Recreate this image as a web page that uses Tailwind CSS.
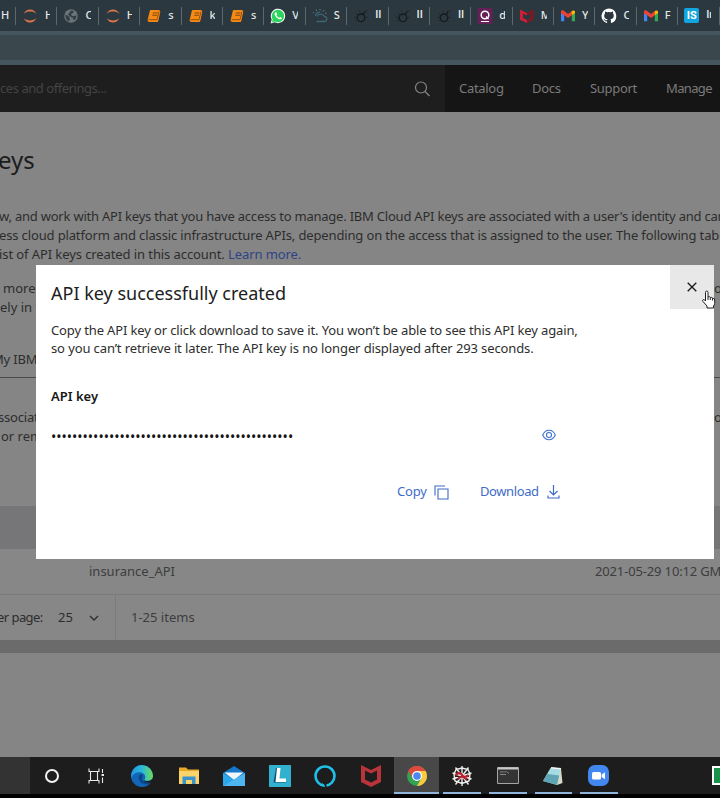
<!DOCTYPE html>
<html lang="en">
<head>
<meta charset="utf-8">
<title>API keys</title>
<script src="https://cdn.jsdelivr.net/npm/@tailwindcss/browser@4"></script>
</head>
<body class="w-[720px] h-[798px] overflow-hidden bg-black font-['Noto_Sans','Open_Sans',sans-serif]">
<svg class="hidden">
  <symbol id="jup" viewBox="0 0 16 16"><path d="M1.500 6C3 2.800 5.500 1.500 8 1.500S13 2.800 14.500 6C12.500 4.200 10.500 3.600 8 3.600S3.500 4.200 1.500 6ZM1.500 10C3 13.200 5.500 14.500 8 14.500S13 13.200 14.500 10C12.500 11.800 10.500 12.400 8 12.400S3.500 11.800 1.500 10Z" fill="#e0754a"/></symbol>
  <symbol id="globe" viewBox="0 0 16 16"><circle cx="8" cy="8" r="6.800" fill="#6a7479"/><path d="M2.500 6.500L6 8.500L7 11L6 13.500C3.500 12.500 2 9.500 2.500 6.500ZM8 2.500L11 3L10 5L8 6L9 8H12L13.500 7L13 10.500L10.500 12.500L10 10L7 8.500L5 6.500Z" fill="#323f46"/></symbol>
  <symbol id="book" viewBox="0 0 16 16"><path d="M4.800 2H12.500C14 2.200 14.500 3 14.200 4.200L12.300 13C12 13.800 11.500 14 10.800 14H3C1.800 13.800 1.300 12.800 1.700 11.600L3.700 3.200C3.900 2.400 4.200 2.100 4.800 2Z" fill="#f68a14"/><path d="M6.800 5H11.500M6.300 7.200H11" stroke="#7c4a1c" stroke-width="1.100"/><path d="M2.500 11.700H11L13 3.500" fill="none" stroke="#8f4c10" stroke-width=".9"/></symbol>
  <symbol id="wa" viewBox="0 0 16 16"><path d="M.6 15.400L1.700 11.500A7.200 7.200 0 1 1 4.600 14.300Z" fill="#fff"/><path d="M1.800 14.200L2.700 11.400A6.200 6.200 0 1 1 4.800 13.400Z" fill="#2bd45c"/><path d="M5.300 4.200C4 5.300 4.500 7.300 6.300 9.300S10.500 12 11.600 10.700C12 10 11.800 9.700 10.200 8.900L9.200 9.800C8 9.300 7 8.300 6.500 7.300L7.200 6.300L6.400 4.400Z" fill="#fff"/></symbol>
  <symbol id="cloud" viewBox="0 0 16 16"><path d="M4.500 13.500H12A2.600 2.600 0 0 0 12.300 8.300A4 4 0 0 0 5 8.500M3.500 8A3.500 3.500 0 0 1 8 4.500" fill="none" stroke="#3f6675" stroke-width="1.300"/><path d="M2 5L.8 4M4.500 3L4 1.500M8 2.500V1M11 3.500L12 2M13 5.500L14.500 5" stroke="#50808f" stroke-width="1"/></symbol>
  <symbol id="sun" viewBox="0 0 16 16"><circle cx="8" cy="9.800" r="3.800" fill="none" stroke="#151b1f" stroke-width="1.400"/><path d="M8.500 6.500Q13 5 11.500 3" fill="none" stroke="#151b1f" stroke-width="1.300"/><path d="M2.300 13L3.500 12.200M1.500 9.500H2.800M3 5.500L4.200 6.500M6.500 2.500L7 3.800M13 3.500L14.200 2.500M13 9.500H14.200" fill="none" stroke="#182024" stroke-width="1"/></symbol>
  <symbol id="qq" viewBox="0 0 16 16"><rect x=".5" width="15" height="16" rx="1.500" fill="#642057"/><circle cx="8" cy="7" r="3.800" fill="none" stroke="#fff" stroke-width="1.500"/><path d="M9 8.500L11.500 11M4 13.500H12" stroke="#fff" stroke-width="1.200"/></symbol>
  <symbol id="shield" viewBox="0 0 16 16"><path d="M1 1.500L8 5V7.500L4 5.500V10L8 12V15L1 11.800Z" fill="#cf1f35"/><path d="M8 5L14.500 1.500V11.800L8 15V12L11.500 10V5.500L8 7.500Z" fill="#7e1924"/></symbol>
  <symbol id="gmail" viewBox="0 0 16 16"><path d="M1 4V13.300H4.200V7Z" fill="#4285f4"/><path d="M15 4V13.300H11.800V7Z" fill="#34a853"/><path d="M1 5.500V3.800C1 2.300 2.800 2 3.800 2.800L8 6L12.200 2.800L11.800 7.200L8 10L4.200 7.200Z" fill="#ea4335"/><path d="M11.800 7.200V3.100C13 2 15 2.300 15 4V5Z" fill="#fbbc04"/></symbol>
  <symbol id="gh" viewBox="0 0 16 16"><path fill="#fff" d="M8 .5a7.500 7.500 0 0 0-2.400 14.600c.4.100.5-.2.500-.4v-1.400c-2.100.5-2.500-1-2.500-1-.4-.9-.9-1.100-.9-1.100-.7-.5 0-.5 0-.5.800.1 1.200.8 1.200.8.700 1.200 1.800.8 2.200.6.100-.5.300-.8.500-1-1.700-.2-3.400-.8-3.400-3.700 0-.8.300-1.500.8-2-.1-.2-.3-1 .1-2 0 0 .6-.2 2 .8a7 7 0 0 1 3.800 0c1.400-1 2-.8 2-.8.400 1 .2 1.800.1 2 .5.500.8 1.200.8 2 0 2.900-1.800 3.500-3.400 3.700.3.200.5.700.5 1.400v2.100c0 .2.100.5.500.4A7.500 7.500 0 0 0 8 .5Z"/></symbol>
</svg>
<div class="flex flex-col w-[720px] h-[798px] overflow-hidden">
  <!-- browser tabs -->
  <div class="flex items-center h-[31px] shrink-0 bg-[#2b383f] text-[#e4e8ea] text-[11px] font-medium">
    <div class="w-[15px] shrink-0 pl-[1px]">H</div>
    <div class="flex items-center w-[41.400px] h-[18px] shrink-0 border-l border-[#5b686e]"><svg class="w-4 h-4 ml-[6px] shrink-0"><use href="#jup"/></svg><span class="ml-[7px] w-[5px] overflow-hidden">H</span></div>
    <div class="flex items-center w-[41.400px] h-[18px] shrink-0 border-l border-[#5b686e]"><svg class="w-4 h-4 ml-[6px] shrink-0"><use href="#globe"/></svg><span class="ml-[6px] w-[6px] overflow-hidden">C</span></div>
    <div class="flex items-center w-[41.400px] h-[18px] shrink-0 border-l border-[#5b686e]"><svg class="w-4 h-4 ml-[6px] shrink-0"><use href="#jup"/></svg><span class="ml-[6px] w-[5px] overflow-hidden">H</span></div>
    <div class="flex items-center w-[41.400px] h-[18px] shrink-0 border-l border-[#5b686e]"><svg class="w-4 h-4 ml-[6px] shrink-0"><use href="#book"/></svg><span class="ml-[6px] w-[7px] overflow-hidden">s</span></div>
    <div class="flex items-center w-[41.400px] h-[18px] shrink-0 border-l border-[#5b686e]"><svg class="w-4 h-4 ml-[6px] shrink-0"><use href="#book"/></svg><span class="ml-[6px] w-[5px] overflow-hidden">k</span></div>
    <div class="flex items-center w-[41.400px] h-[18px] shrink-0 border-l border-[#5b686e]"><svg class="w-4 h-4 ml-[6px] shrink-0"><use href="#book"/></svg><span class="ml-[6px] w-[7px] overflow-hidden">s</span></div>
    <div class="flex items-center w-[41.400px] h-[18px] shrink-0 border-l border-[#5b686e]"><svg class="w-4 h-4 ml-[6px] shrink-0"><use href="#wa"/></svg><span class="ml-[6px] w-[6px] overflow-hidden">V</span></div>
    <div class="flex items-center w-[41.400px] h-[18px] shrink-0 border-l border-[#5b686e]"><svg class="w-4 h-4 ml-[6px] shrink-0"><use href="#cloud"/></svg><span class="ml-[6px] w-[7px] overflow-hidden">S</span></div>
    <div class="flex items-center w-[41.400px] h-[18px] shrink-0 border-l border-[#5b686e]"><svg class="w-4 h-4 ml-[6px] shrink-0"><use href="#sun"/></svg><span class="ml-[6px] w-[7px] overflow-hidden font-['Roboto',sans-serif]">II</span></div>
    <div class="flex items-center w-[41.400px] h-[18px] shrink-0 border-l border-[#5b686e]"><svg class="w-4 h-4 ml-[6px] shrink-0"><use href="#sun"/></svg><span class="ml-[6px] w-[7px] overflow-hidden font-['Roboto',sans-serif]">II</span></div>
    <div class="flex items-center w-[41.400px] h-[18px] shrink-0 border-l border-[#5b686e]"><svg class="w-4 h-4 ml-[6px] shrink-0"><use href="#sun"/></svg><span class="ml-[6px] w-[7px] overflow-hidden font-['Roboto',sans-serif]">II</span></div>
    <div class="flex items-center w-[41.400px] h-[18px] shrink-0 border-l border-[#5b686e]"><svg class="w-4 h-4 ml-[6px] shrink-0"><use href="#qq"/></svg><span class="ml-[6px] w-[6px] overflow-hidden">d</span></div>
    <div class="flex items-center w-[41.400px] h-[18px] shrink-0 border-l border-[#5b686e]"><svg class="w-4 h-4 ml-[6px] shrink-0"><use href="#shield"/></svg><span class="ml-[6px] w-[6px] overflow-hidden">M</span></div>
    <div class="flex items-center w-[41.400px] h-[18px] shrink-0 border-l border-[#5b686e]"><svg class="w-4 h-4 ml-[6px] shrink-0"><use href="#gmail"/></svg><span class="ml-[6px] w-[6px] overflow-hidden">Y</span></div>
    <div class="flex items-center w-[41.400px] h-[18px] shrink-0 border-l border-[#5b686e]"><svg class="w-4 h-4 ml-[6px] shrink-0"><use href="#gh"/></svg><span class="ml-[6px] w-[6px] overflow-hidden">C</span></div>
    <div class="flex items-center w-[41.400px] h-[18px] shrink-0 border-l border-[#5b686e]"><svg class="w-4 h-4 ml-[6px] shrink-0"><use href="#gmail"/></svg><span class="ml-[6px] w-[6px] overflow-hidden">F</span></div>
    <div class="flex items-center w-[41.400px] h-[18px] shrink-0 border-l border-[#5b686e]"><span class="w-[15px] h-[15px] ml-[6px] shrink-0 rounded-[2px] bg-[#12a5df] text-white font-bold font-['Roboto',sans-serif] text-[11px] leading-[15px] text-center">IS</span><span class="ml-[7px] w-[5px] overflow-hidden font-['Roboto',sans-serif]">In</span></div>
    <div class="w-px h-[18px] bg-[#5b686e] shrink-0"></div>
  </div>
  <!-- browser toolbar -->
  <div class="h-[34px] shrink-0 bg-[#3a474d] border-t-[4px] border-b-[5px] border-[#45565f]"></div>
  <!-- console header -->
  <div class="flex items-center h-[47px] shrink-0 bg-[#1e1e1e] text-[13px]">
    <span class="w-[414px] shrink-0 text-[#444] whitespace-nowrap overflow-hidden tracking-[-0.450px]">ces and offerings...</span>
    <svg class="w-4 h-4 shrink-0" viewBox="0 0 16 16" fill="none" stroke="#858585" stroke-width="1.200"><circle cx="7" cy="6.500" r="5.500"/><path d="M11 10.500L15.500 15"/></svg>
    <nav class="flex items-center h-full ml-[15px] pl-[14px] w-[275px] shrink-0 bg-[#151515] text-[#7b7b7b] whitespace-nowrap overflow-hidden tracking-[-0.300px]">
      <span class="w-[73px] shrink-0">Catalog</span><span class="w-[58px] shrink-0">Docs</span><span class="w-[76px] shrink-0">Support</span><span class="tracking-[-0.650px]">Manage</span>
    </nav>
  </div>
  <!-- page -->
  <main class="flex flex-col h-[645px] shrink-0 bg-[#858585] text-[#2d2d2d] text-[13px] leading-[19px] whitespace-nowrap overflow-hidden">
    <h1 class="mt-[30px] h-9 leading-9 text-[24px] text-[#1c1c1c] ml-[-2px]">eys</h1>
    <div class="mt-[29px] h-[57px] ml-[-1px]">
      <p class="tracking-[-0.220px]">w, and work with API keys that you have access to manage. IBM Cloud API keys are associated with a user's identity and can</p>
      <p class="tracking-[-0.140px]">ess cloud platform and classic infrastructure APIs, depending on the access that is assigned to the user. The following table</p>
      <p class="tracking-[-0.090px]">ist of API keys created in this account. <span class="text-[#2f4486]">Learn more.</span></p>
    </div>
    <div class="mt-[15px] h-[38px]">
      <p class="flex justify-between"><span class="pl-[3px]">more</span><span class="w-[6px] overflow-hidden">o</span></p>
      <p>ely in the</p>
    </div>
    <div class="mt-[25px] h-[36px] pt-[8px] border-b border-[#4a4a4a] ml-[-8px] tracking-[-0.200px]">My IBM Cloud</div>
    <div class="mt-[30px] h-[38px]">
      <p class="flex justify-between"><span class="tracking-[-0.200px] ml-[-2px]">ssociated</span><span class="w-[6px] overflow-hidden">o</span></p>
      <p class="pl-[1px]">or remove</p>
    </div>
    <div class="mt-[60px] h-[43px] shrink-0 bg-[#767678]"></div>
    <div class="flex items-center h-[46px] shrink-0 border-b border-[#7b7b7b] text-[#3d3d3d] bg-[#878787]">
      <span class="ml-[89px] w-[506px] shrink-0">insurance_API</span><span class="tracking-[-0.150px]">2021-05-29 10:12 GMT</span>
    </div>
    <div class="flex items-center h-[45px] shrink-0 bg-[#878787]">
      <span class="w-[61px] ml-[-3px] shrink-0 tracking-[-0.550px]">er page:</span><span class="w-[31px] shrink-0">25</span>
      <svg class="w-[10px] h-[10px] shrink-0" viewBox="0 0 10 10" fill="none" stroke="#2d2d2d" stroke-width="1.300"><path d="M1 3L5 7L9 3"/></svg>
      <div class="flex items-center h-full ml-4 pl-[15px] border-l border-[#7b7b7b] text-[#3d3d3d]">1-25 items</div>
    </div>
    <div class="h-[13px] shrink-0 bg-[#6b6b6b]"></div>
  </main>
  <!-- taskbar -->
  <footer class="flex h-[37px] shrink-0 bg-[#1d1d1d]">
    <div class="w-[30px] shrink-0 bg-[#333]"></div>
    <div class="w-[43px] shrink-0 flex items-center justify-center"><svg class="w-4 h-4" viewBox="0 0 16 16"><circle cx="8" cy="8" r="6" fill="none" stroke="#f2f2f2" stroke-width="2"/></svg></div>
    <div class="w-[45px] shrink-0 flex items-center justify-center"><svg class="w-4 h-4" viewBox="0 0 16 16" fill="none" stroke="#e8e8e8" stroke-width="1.100"><path d="M.5 3.500H11.500M.5 12.500H11.500M2.500 3.500V12.500M9.500 3.500V12.500M1 .5V3M11 .5V3M1 13V15.500M11 13V15.500M14.500 1V5M14.500 9.500V15"/><path d="M13.500 7H16" stroke-width="2"/></svg></div>
    <div class="w-[48px] shrink-0 flex items-center justify-center"><svg class="w-[24px] h-[24px]" viewBox="0 0 24 24"><defs><linearGradient id="eg" x1="0" x2="1"><stop offset="0" stop-color="#2196e4"/><stop offset=".5" stop-color="#2bb9d8"/><stop offset="1" stop-color="#6fdc55"/></linearGradient></defs><circle cx="12" cy="12" r="11" fill="#1266b8"/><path d="M1.200 10A11 11 0 0 1 23 12C22.800 16 19 17.500 15.500 16.500C13.500 16 15.500 14.500 15.300 12.500C15 10 12 8 8.500 8.300C5 8.600 2.500 11 1.200 14Z" fill="url(#eg)"/><path d="M9.500 11C7 14.500 10 20.500 17.500 20.500C19 20.300 20.500 19 21.500 17.500C17 20 12.500 18 12 14.800C11.800 13.200 13 12.500 13 11.500C12 10 10.500 10 9.500 11Z" fill="#0c4688"/><path d="M13.800 16.500C17 18 21 17 22.500 14.500L23.500 16L21.500 18.200C18 19.500 15 18.500 13.800 16.500Z" fill="#1d1d1d"/></svg></div>
    <div class="w-[45px] shrink-0 flex items-center justify-center"><svg class="w-[22px] h-5" viewBox="0 0 22 20"><path d="M1 1.500H8L10 3.500H21V18H1Z" fill="#e9a929"/><path d="M1 5H21V18H1Z" fill="#fbd36b"/><path d="M4.500 18V10.500H17.500V18H14V14H8V18Z" fill="#3b93cb"/></svg></div>
    <div class="w-[46px] shrink-0 flex items-center justify-center"><svg class="w-6 h-[22px]" viewBox="0 0 24 22"><path d="M1 8L12 1L23 8V21H1Z" fill="#1378c9"/><path d="M2.500 7.500H21.500L12 15Z" fill="#f1f6fa"/><path d="M1 8L12 15L1 21Z" fill="#2ba7ec"/><path d="M1 21L23 8V21Z" fill="#4db6f0"/></svg></div>
    <div class="w-[45px] shrink-0 flex items-center justify-center"><svg class="w-[22px] h-[22px]" viewBox="0 0 22 22"><path fill="#31b0cf" d="M0 0H22V22H0Z"/><path d="M7 3H10L8.500 14H17V17.500H4.500Z" fill="#174c75"/><path d="M8 3H11.500L10.500 13.500H17V17H6.500Z" fill="#fff"/></svg></div>
    <div class="w-[46px] shrink-0 flex items-center justify-center"><svg class="w-[22px] h-[22px]" viewBox="0 0 22 22"><path d="M9.500 20.500C6 20 1.500 16.500 1.500 11A9.500 9.500 0 0 1 20.500 11C20.500 16.500 16 20 12.500 20.500" fill="none" stroke="#20bfe8" stroke-width="2.600"/><path d="M8 18C10 19.500 11 20 11 22C9 22 8 21 8 18Z" fill="#20bfe8"/></svg></div>
    <div class="w-[46px] shrink-0 flex items-center justify-center"><svg class="w-5 h-[22px]" viewBox="0 0 20 22"><path d="M0 0L10 5L20 0V17L10 22L0 17ZM4 5.500V14.500L10 17.500L16 14.500V5.500L10 8.500Z" fill="#b9343a" fill-rule="evenodd"/></svg></div>
    <div class="w-[45px] shrink-0 flex items-center justify-center bg-[#484848] border-b-2 border-[#8eb4dc] pt-[2px]"><svg class="w-5 h-5" viewBox="0 0 20 20"><circle cx="10" cy="10" r="10" fill="#32a350"/><path d="M10 10L1.340 5A10 10 0 0 1 18.660 5Z" fill="#de4b3d"/><path d="M10 5H18.660A10 10 0 0 1 10 20L14.330 12.500Z" fill="#fccc3e"/><path d="M1.340 5A10 10 0 0 1 10 0V10L5.670 12.500Z" fill="#de4b3d"/><circle cx="10" cy="10" r="5" fill="#fff"/><circle cx="10" cy="10" r="3.800" fill="#4a87ee"/></svg></div>
    <div class="w-[38px] ml-[4px] shrink-0 flex items-center justify-center border-b-2 border-[#8eb4dc] pt-[2px]"><svg class="w-[22px] h-[22px]" viewBox="0 0 22 22" fill="none"><path d="M11 1V21M1.500 8L20.500 14M4.500 19.500L17.500 2.500M17.500 19.500L4.500 2.500M1.500 14L20.500 8M5 4.500L11 3L17 4.500L19 9L18 16L11 18.500L4 16L3 9Z" stroke="#eee" stroke-width="1.400"/><path d="M4.500 10.500Q8 6 11 10T17.500 10M7 14.500Q10 9 15.500 14.500" stroke="#b5222d" stroke-width="2.200"/></svg></div>
    <div class="w-[38px] ml-[8px] shrink-0 flex items-center justify-center border-b-2 border-[#8eb4dc] pt-[2px]"><svg class="w-[22px] h-[17px]" viewBox="0 0 22 17"><path d="M.5.500H21.500V16.500H.5Z" fill="#343434" stroke="#a5a5a5"/><path d="M1 1.500H21" stroke="#c8c8c8" stroke-width="2"/><path d="M3 5H10L12 6.500M3 7.500H9" stroke="#888"/></svg></div>
    <div class="w-[37px] ml-[8px] shrink-0 flex items-center justify-center border-b-2 border-[#8eb4dc] pt-[2px] pr-[2px]"><svg class="w-[20px] h-5" viewBox="0 0 20 20"><path d="M9 1.500L18 2.500L19.500 17L14 19Z" fill="#d9d8c8"/><path d="M7.500 2L17.500 3L14 19L0 15Z" fill="#a5dbe2"/><path d="M4.500 8L16.200 9.500L14 19L0 15Z" fill="#5fa5b3"/><path d="M8 1.700L18 2.700" stroke="#f4f4f4" stroke-width="1.500"/></svg></div>
    <div class="w-[38px] ml-[8px] shrink-0 flex items-center justify-center border-b-2 border-[#8eb4dc] pt-[2px] pr-[2px]"><svg class="w-[21px] h-[21px]" viewBox="0 0 21 21"><rect width="21" height="21" rx="7" fill="#4388f0"/><rect x="4" y="7" width="9" height="7.500" rx="1.500" fill="#fff"/><path d="M13.700 9.500L17 7.200V14.300L13.700 12Z" fill="#fff"/></svg></div>
    <div class="ml-auto mt-[9px] w-2 h-[19px] bg-[#169447] border-2 border-r-0 border-white"></div>
  </footer>
</div>

<!-- dialog -->
<section class="absolute left-[36px] top-[265px] w-[678px] h-[294px] bg-white text-[#2e2e2e] text-[13px] whitespace-nowrap">
  <div class="flex justify-between h-[44px]">
    <h2 class="pl-[15px] pt-[15px] text-[18px] leading-[27px] text-[#202020]">API key successfully created</h2>
    <button class="w-[44px] h-[44px] bg-[#e8e8e8] flex items-center justify-center"><svg class="w-[10px] h-[10px]" viewBox="0 0 10 10" stroke="#161616" stroke-width="1.300"><path d="M.7.700L9.300 9.300M9.300.700L.7 9.300"/></svg></button>
  </div>
  <div class="pl-[15px] pt-[12px] h-[49px] leading-[18px]">
    <p class="tracking-[-0.130px]">Copy the API key or click download to save it. You won’t be able to see this API key again,</p>
    <p class="tracking-[-0.115px]">so you can’t retrieve it later. The API key is no longer displayed after 293 seconds.</p>
  </div>
  <p class="pl-[15px] mt-[28px] h-5 leading-5 font-semibold text-[#161616]">API key</p>
  <div class="flex items-center justify-between h-[20px] mt-[19px] pl-[15px] w-[520px]">
    <span class="text-[#161616] text-[14px] leading-5 pt-[4px]">••••••••••••••••••••••••••••••••••••••••••••••</span>
    <svg class="w-[14px] h-[12px]" viewBox="0 0 14 12" fill="none" stroke="#3c6fd1" stroke-width="1.100"><path d="M.7 6C2 3 4.300 1.200 7 1.200S12 3 13.300 6C12 9 9.700 10.800 7 10.800S2 9 .7 6Z"/><circle cx="7" cy="6" r="2.500"/></svg>
  </div>
  <div class="flex items-center h-5 mt-[37px] pl-[361px] text-[#3f6cc8]">
    <span class="w-[37px] tracking-[-0.200px]">Copy</span>
    <svg class="w-[15px] h-[15px]" viewBox="0 0 15 15" fill="none" stroke="currentColor" stroke-width="1.100"><path d="M4 4H14V14H4ZM1 10.500V1H11"/></svg>
    <span class="ml-[31px] w-[67px] tracking-[-0.400px]">Download</span>
    <svg class="w-[13px] h-[14px]" viewBox="0 0 13 14" fill="none" stroke="currentColor" stroke-width="1.200"><path d="M6.500 0V10M2.500 6L6.500 10L10.500 6M1 10.500V13H12V10.500"/></svg>
  </div>
</section>
<svg class="absolute left-[701px] top-[290px] w-[15px] h-[19px]" viewBox="0 0 15 19"><path d="M4.500 11V2.500Q4.500 1 5.700 1T7 2.500V7Q9 6 9.300 7.500Q11 6.800 11.500 8.200Q13.700 7.800 13.700 10V13.500Q13.500 15 12.500 16V18H6V16L2 11.500Q1 9.800 2.500 9.500Q3.500 9.500 4.500 11ZM7 7V10M9.300 7.500V10M11.500 8.200V10.500" fill="#fff" stroke="#222" stroke-width="1"/></svg>
</body>
</html>
